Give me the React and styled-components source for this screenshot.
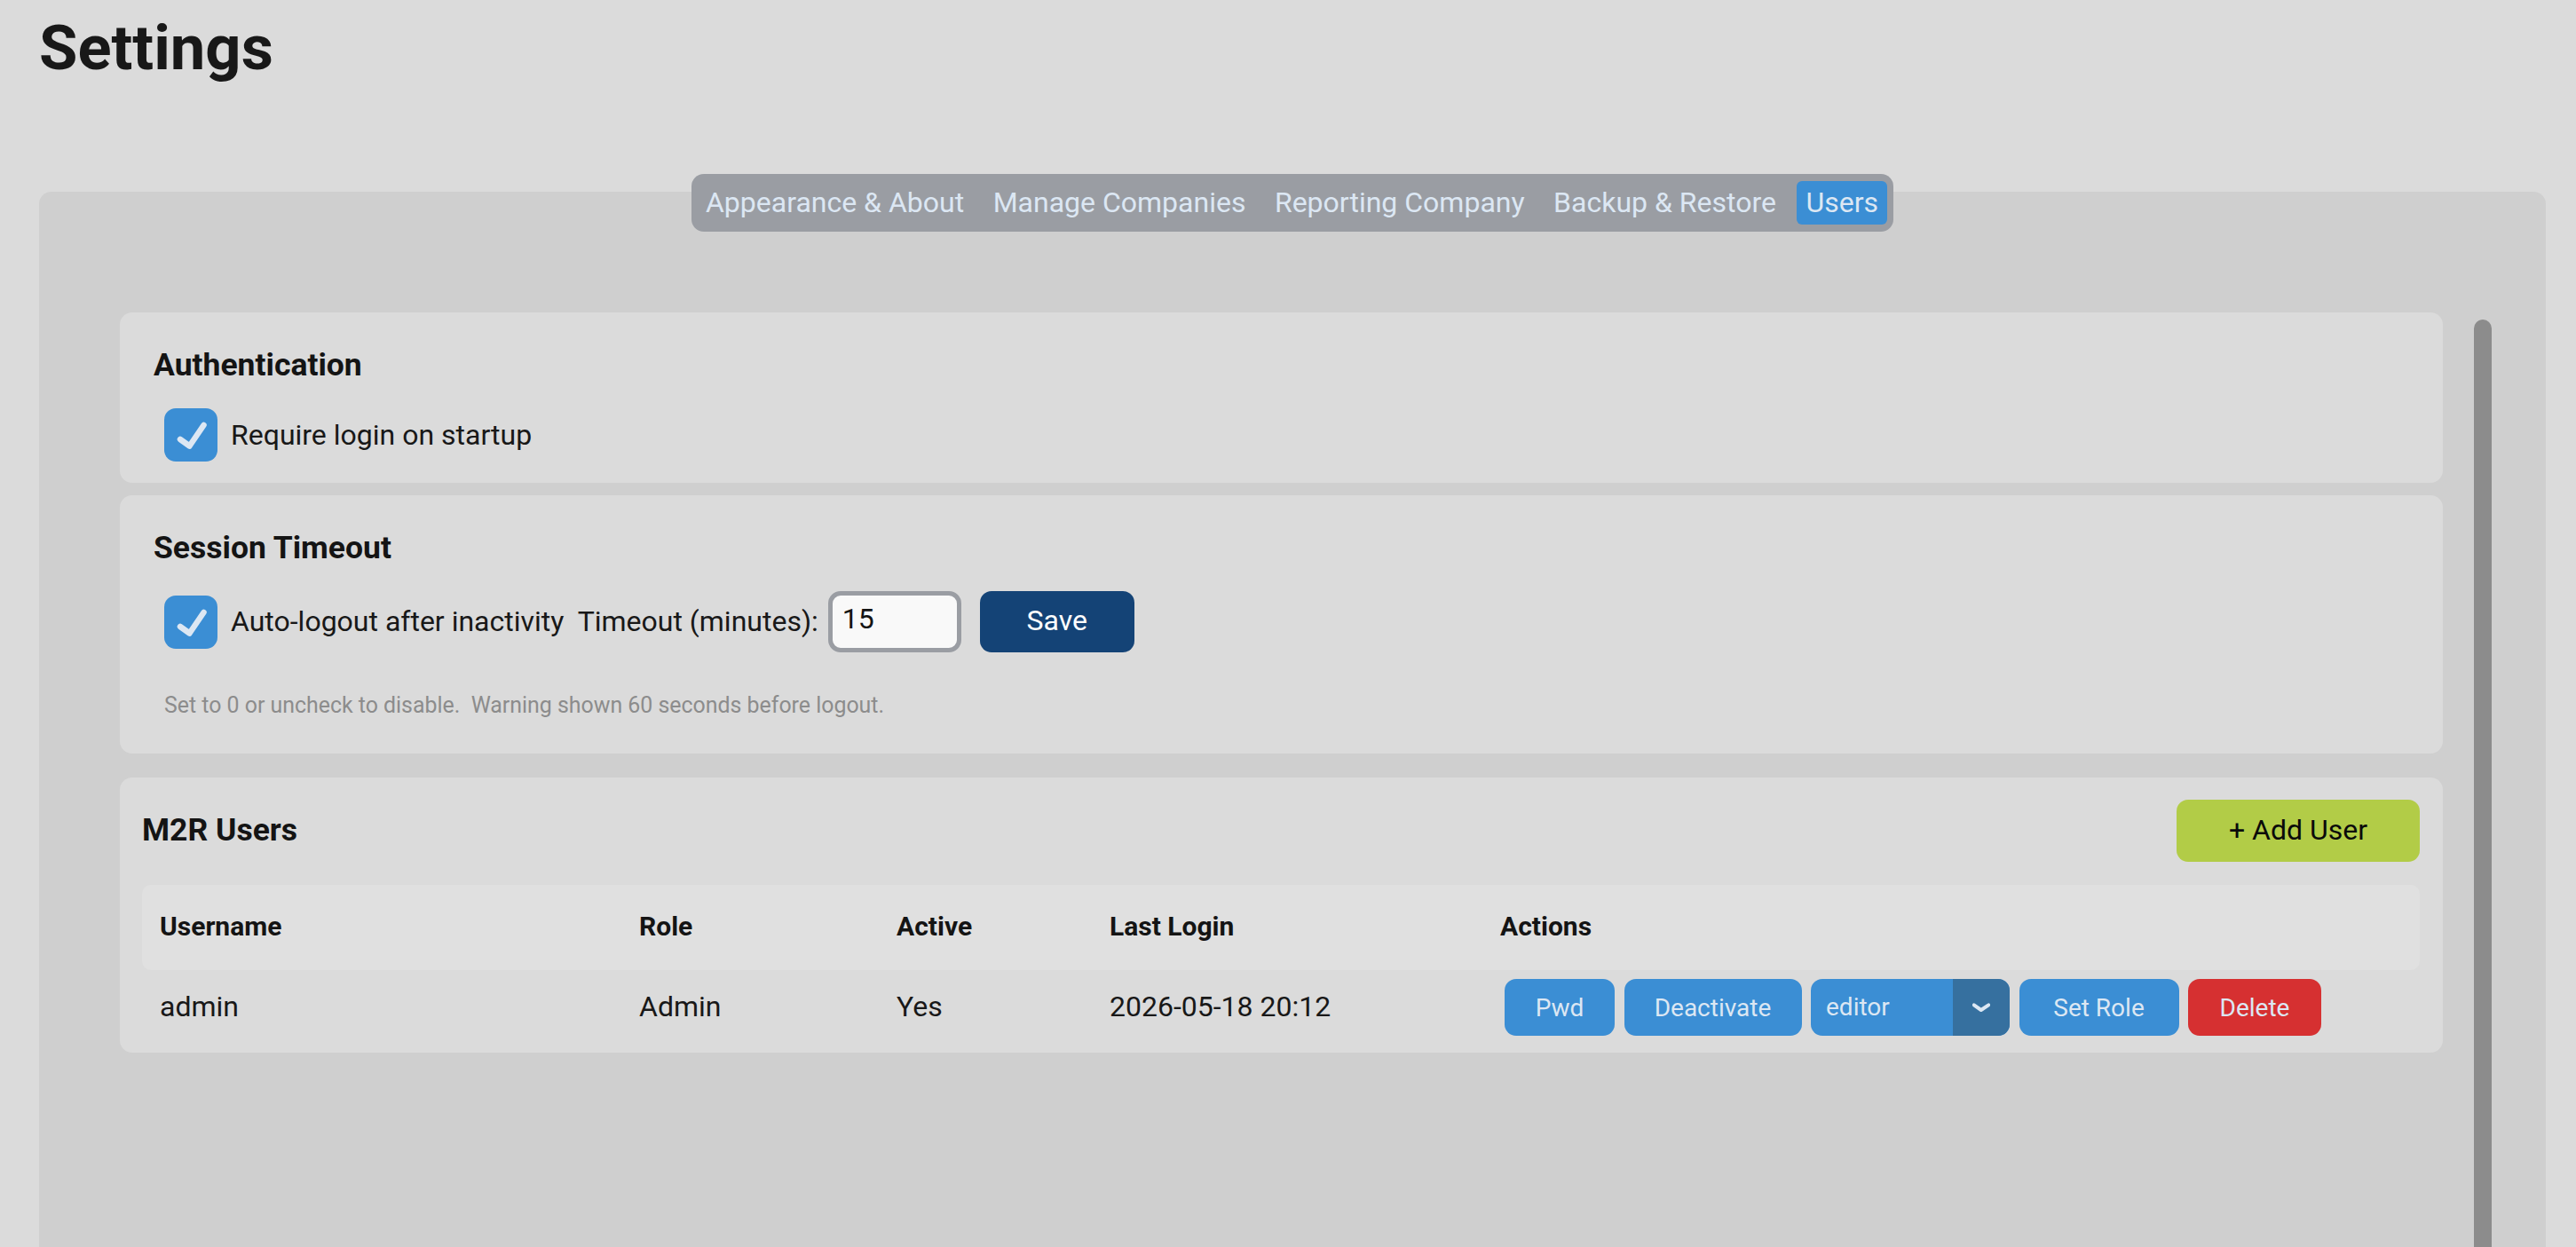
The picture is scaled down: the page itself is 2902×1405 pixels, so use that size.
import React from "react";
import styled, { createGlobalStyle } from "styled-components";

const Global = createGlobalStyle`
  html, body { margin: 0; padding: 0; height: 100%; overflow: hidden; background: #dbdbdb; }
  body { font-family: Roboto, "Liberation Sans", sans-serif; color: #141414; }
  * { box-sizing: border-box; }
`;

const Page = styled.div`
  height: 100vh; padding: 0 34px 0 44px; display: flex; flex-direction: column; overflow: hidden;
`;
const Title = styled.h1`
  margin: 0; height: 196px; padding-top: 15px; font-size: 70.5px; line-height: 78px; font-weight: 700; color: #181818;
`;
const TabRow = styled.div`
  display: flex; justify-content: center; position: relative; z-index: 1; margin-bottom: -45px;
`;
const TabBar = styled.div`
  display: flex; align-items: center; height: 65px; padding: 0 7px; background: #9a9da3; border-radius: 14px; gap: 14.5px;
`;
const Tab = styled.div`
  height: 49px; padding: 0 ${p => (p.$active ? 10 : 9)}px 2px; display: flex; align-items: center; border-radius: 6px;
  font-size: 32px; color: #dce7f3; background: ${p => (p.$active ? "#3b8ed4" : "transparent")};
`;
const Panel = styled.div`
  flex: 1; background: #cfcfcf; border-radius: 14px 14px 0 0; padding: 136px 116px 0 91px; position: relative; min-height: 0;
`;
const Scrollbar = styled.div`
  position: absolute; top: 144px; bottom: 0; left: 2743px; width: 20px; background: #8c8c8c; border-radius: 10px 10px 0 0;
`;
const Card = styled.section`
  background: #dbdbdb; border-radius: 14px; margin-bottom: ${p => p.$mb || 14}px; height: ${p => p.$h}px; padding: ${p => p.$pad || "0 38px"};
`;
const Heading = styled.h2`
  margin: 0; font-size: 35.5px; line-height: 40px; font-weight: 700; color: #141414;
`;
const CardTitle = styled(Heading)`
  padding-top: ${p => p.$top}px;
`;
const UsersTitle = styled(Heading)`
  padding-bottom: 2px;
`;
const Row = styled.div`
  display: flex; align-items: center; margin-left: 12px; margin-top: ${p => p.$mt}px;
`;
const Box = styled.span`
  width: 60px; height: 60px; background: #3b8ed4; border-radius: 13px; display: inline-flex; flex: none;
`;
const Label = styled.span`
  font-size: 32px; margin-left: 15px; color: #181818; white-space: pre; padding-bottom: ${p => p.$lift || 0}px;
`;
const NumberInput = styled.input`
  width: 150px; height: 69px; margin-left: 11px; border: 5px solid #9a9da3; border-radius: 14px; background: #f9f9f9;
  font: 32px Roboto, sans-serif; color: #141414; padding: 0 11px 8px; outline: none;
`;
const Button = styled.button`
  border: none; font-family: Roboto, sans-serif; cursor: pointer; display: inline-flex; align-items: center; justify-content: center;
  padding: 0 0 ${p => p.$lift || 0}px;
  width: ${p => p.$w}px; height: ${p => p.$h || 64}px; border-radius: 13px;
  font-size: ${p => p.$fs || 28}px; background: ${p => p.$bg || "#3b8ed4"}; color: ${p => p.$fg || "#dce7f3"};
  margin-left: ${p => p.$ml || 0}px; flex: none;
`;
const Hint = styled.p`
  margin: 45px 0 0 12px; font-size: 24.9px; line-height: 30px; color: #8c8c8c; white-space: pre;
`;
const UsersHead = styled.div`
  display: flex; justify-content: space-between; align-items: center; padding: 25px 26px 0 25px; height: 95px;
`;
const Table = styled.table`
  border-collapse: separate; border-spacing: 0; table-layout: fixed; width: 2566px; margin: 26px 0 0 25px; font-size: 32px;
`;
const Th = styled.th`
  height: 96px; background: #e0e0e0; padding: 0 0 3px 20px; text-align: left; font-weight: 700; color: #141414; font-size: 30px;
  &:first-child { border-radius: 10px 0 0 10px; }
  &:last-child { border-radius: 0 10px 10px 0; }
`;
const Td = styled.td`
  height: 92px; padding: 0 0 10px 20px; color: #181818;
`;
const Actions = styled.div`
  display: flex; align-items: center; gap: 10.5px; margin-left: 5px; margin-top: 2px;
`;
const Select = styled.div`
  width: 224px; height: 64px; border-radius: 13px; background: #3b8ed4; color: #dce7f3; display: flex; overflow: hidden; font-size: 28px; align-items: stretch; flex: none;
`;
const SelectValue = styled.span`
  flex: 1; display: flex; align-items: center; padding-left: 17px; padding-bottom: 1px;
`;
const SelectArrow = styled.span`
  width: 64px; background: #36709f; display: flex; align-items: center; justify-content: center;
`;

const Check = () => (
  <svg width="60" height="60" viewBox="0 0 60 60" fill="none">
    <path d="M18 35L28.5 42.5L44.5 19" stroke="#dce7f3" strokeWidth="6.5" strokeLinecap="round" strokeLinejoin="round" />
  </svg>
);

const cols = [540, 290, 240, 440, 1056];

export default function App() {
  return (
    <Page>
      <Global />
      <Title>Settings</Title>
      <TabRow>
        <TabBar>
          <Tab>Appearance &amp; About</Tab>
          <Tab>Manage Companies</Tab>
          <Tab>Reporting Company</Tab>
          <Tab>Backup &amp; Restore</Tab>
          <Tab $active>Users</Tab>
        </TabBar>
      </TabRow>
      <Panel>
        <Scrollbar />
        <Card $h={192}>
          <CardTitle $top={39}>Authentication</CardTitle>
          <Row $mt={29}>
            <Box><Check /></Box>
            <Label>Require login on startup</Label>
          </Row>
        </Card>
        <Card $h={291} $mb={27}>
          <CardTitle $top={39}>Session Timeout</CardTitle>
          <Row $mt={29}>
            <Box><Check /></Box>
            <Label $lift={2}>{"Auto-logout after inactivity  Timeout (minutes):"}</Label>
            <NumberInput defaultValue="15" />
            <Button $w={174} $h={69} $bg="#144376" $fg="#ffffff" $ml={21} $fs={32} $lift={3}>Save</Button>
          </Row>
          <Hint>{"Set to 0 or uncheck to disable.  Warning shown 60 seconds before logout."}</Hint>
        </Card>
        <Card $h={310} $pad="0">
          <UsersHead>
            <UsersTitle>M2R Users</UsersTitle>
            <Button $w={274} $h={70} $bg="#b2cc47" $fg="#0a0a0a" $fs={32} $lift={3}>+ Add User</Button>
          </UsersHead>
          <Table>
            <colgroup>{cols.map(w => <col key={w} width={w} />)}</colgroup>
            <thead>
              <tr><Th>Username</Th><Th>Role</Th><Th>Active</Th><Th>Last Login</Th><Th>Actions</Th></tr>
            </thead>
            <tbody>
              <tr>
                <Td>admin</Td><Td>Admin</Td><Td>Yes</Td><Td>2026-05-18 20:12</Td>
                <Td>
                  <Actions>
                    <Button $w={124}>Pwd</Button>
                    <Button $w={200}>Deactivate</Button>
                    <Select>
                      <SelectValue>editor</SelectValue>
                      <SelectArrow>
                        <svg width="20" height="12" viewBox="0 0 20 12" fill="none">
                          <path d="M1.8 3.3L9.8 9L18.2 3.3" stroke="#dce7f3" strokeWidth="4" strokeLinecap="round" strokeLinejoin="round" />
                        </svg>
                      </SelectArrow>
                    </Select>
                    <Button $w={180}>Set Role</Button>
                    <Button $w={150} $bg="#d63031">Delete</Button>
                  </Actions>
                </Td>
              </tr>
            </tbody>
          </Table>
        </Card>
      </Panel>
    </Page>
  );
}
